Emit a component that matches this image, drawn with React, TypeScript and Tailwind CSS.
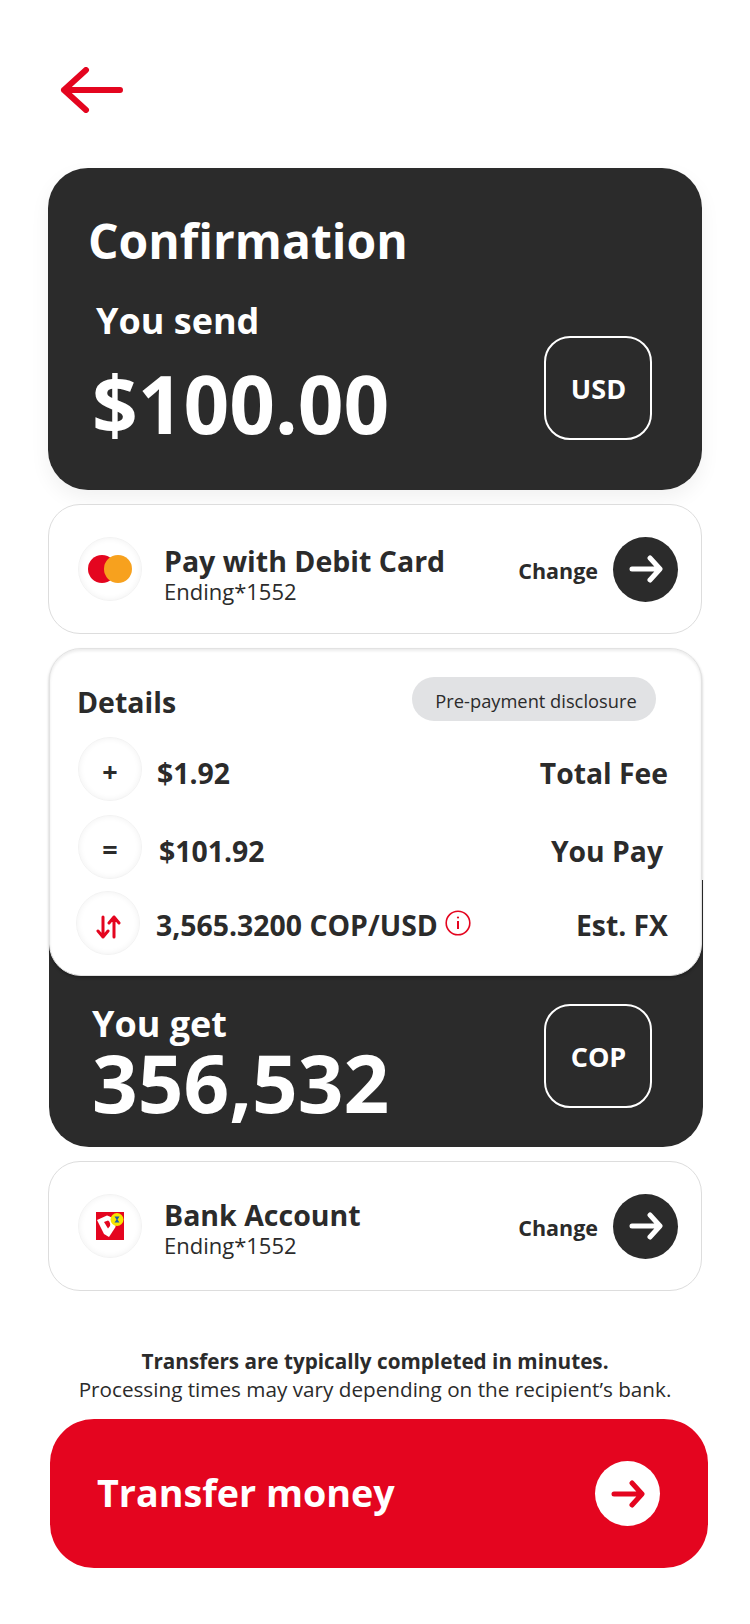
import React from "react";

const Arrow = ({ color }: { color: string }) => (
  <svg width="34" height="28" viewBox="0 0 34 28" fill="none" stroke={color} strokeWidth="5" strokeLinecap="round" strokeLinejoin="round">
    <path d="M3 14H30M21 3L31 14L21 25" />
  </svg>
);

const Circle = ({ children, className = "" }: { children?: React.ReactNode; className?: string }) => (
  <div className={`w-16 h-16 shrink-0 rounded-full bg-white flex items-center justify-center border border-[#f3f3f3] shadow-[inset_0_0_6px_rgba(0,0,0,0.06)] ${className}`}>
    {children}
  </div>
);

const PayRow = ({ icon, title, textClass }: { icon: React.ReactNode; title: string; textClass: string }) => (
  <div className="h-[130px] rounded-[32px] border border-[#dddddd] bg-white flex items-center pl-[29px] pr-[23px]">
    <Circle>{icon}</Circle>
    <div className={`ml-[22px] flex-1 flex flex-col ${textClass}`}>
      <div className="text-[28.5px] leading-[34px] font-bold">{title}</div>
      <div className="text-[22px] leading-[26px] font-normal">Ending*1552</div>
    </div>
    <div className="text-[21.5px] font-bold mr-[15px] pt-[4px]">Change</div>
    <div className="w-[65px] h-[65px] rounded-full bg-[#2b2b2b] flex items-center justify-center">
      <Arrow color="#ffffff" />
    </div>
  </div>
);

const CodeBox = ({ code }: { code: string }) => (
  <div className="w-[108px] h-[104px] rounded-[26px] border-2 border-white flex items-center justify-center text-white text-[27px] font-bold pt-[3px] pl-[1px]">
    {code}
  </div>
);

const DetailRow = ({ sym, left, right, className = "", rightClass = "", textClass = "pt-[8px]" }: { sym: React.ReactNode; left: React.ReactNode; right: string; className?: string; rightClass?: string; textClass?: string }) => (
  <div className={`flex items-center ${className}`}>
    <Circle className="pt-[7px]">{sym}</Circle>
    <div className={`ml-[15px] flex-1 text-[28.4px] font-bold flex items-center ${textClass}`}>{left}</div>
    <div className={`text-[28.3px] font-bold ${textClass} ${rightClass}`}>{right}</div>
  </div>
);

export default function App() {
  return (
    <div className="w-[750px] h-[1624px] bg-white text-[#2b2b2b] font-['Open_Sans',sans-serif] overflow-hidden">
      <div className="pt-[67px] pl-[60px] h-[168px]">
        <svg width="66" height="46" viewBox="0 0 66 46" fill="none" stroke="#e4051f" strokeWidth="6" strokeLinecap="round" strokeLinejoin="round">
          <path d="M4 23H60M26 3L4 23L26 43" />
        </svg>
      </div>

      <div className="mx-12 w-[654px]">
        <div className="h-[322px] rounded-[40px] bg-[#2b2b2b] text-white shadow-[0_8px_20px_rgba(0,0,0,0.06)] flex flex-col pl-10 pr-[50px] pt-[37px]">
          <div className="text-[48px] leading-[66px] font-bold mt-[3px]">Confirmation</div>
          <div className="flex items-start justify-between">
            <div className="pl-[8px]">
              <div className="text-[36px] leading-[48px] font-bold mt-[23px]">You send</div>
              <div className="-ml-[4px] text-[80px] leading-[100px] font-bold mt-[8px]">$100.00</div>
            </div>
            <div className="mt-[62px]"><CodeBox code="USD" /></div>
          </div>
        </div>

        <div className="mt-[14px]">
          <PayRow
            title="Pay with Debit Card"
            textClass="pt-[10px]"
            icon={
              <svg width="44" height="28" viewBox="0 0 44 28">
                <circle cx="14" cy="14" r="14" fill="#e4051f" />
                <circle cx="30" cy="14" r="14" fill="#f7a11e" />
              </svg>
            }
          />
        </div>

        <div className="relative z-10 mt-[14px] ml-[1px] h-[328px] rounded-[32px] bg-white border border-[#e2e2e2] shadow-[inset_0_2px_3px_rgba(0,0,0,0.08),0_2px_3px_rgba(0,0,0,0.25)] pl-[28px] pr-[33px] pt-[28px]">
          <div className="flex items-center justify-between h-[44px]">
            <div className="text-[28.5px] font-bold mt-[6px] -ml-[1px]">Details</div>
            <div className="mr-[12px] w-[244px] h-[44px] rounded-full bg-[#e1e2e4] flex items-center justify-center text-[18.3px] pl-[4px] pt-[3px]">Pre-payment disclosure</div>
          </div>
          <DetailRow className="mt-[16px]" sym={<span className="text-[27px] font-bold">+</span>} left="$1.92" right="Total Fee" />
          <DetailRow className="mt-[14px]" sym={<span className="text-[27px] font-bold">=</span>} left={<span className="ml-[2px]">$101.92</span>} right="You Pay" rightClass="mr-[5px]" />
          <DetailRow
            className="mt-[12px] -ml-[2px]"
            textClass="pt-[5px] pl-[1px]"
            sym={
              <svg width="26" height="26" viewBox="0 0 26 26" fill="none" stroke="#e4051f" strokeWidth="3" strokeLinecap="round" strokeLinejoin="round">
                <path d="M8 3V23M3 17L8 23L13 17M19 23V3M14 9L19 3L24 9" />
              </svg>
            }
            left={
              <>
                <span>3,565.3200 COP/USD</span>
                <svg className="ml-[7px] -mt-[4px]" width="26" height="26" viewBox="0 0 26 26" fill="none" stroke="#e4051f" strokeWidth="1.6">
                  <circle cx="13" cy="13" r="11.8" />
                  <path d="M13 11V19" strokeWidth="2" />
                  <circle cx="13" cy="7.5" r="1.1" fill="#e4051f" stroke="none" />
                </svg>
              </>
            }
            right="Est. FX"
          />
        </div>

        <div className="-mt-[96px] ml-[1px] w-[654px] h-[267px] rounded-b-[40px] bg-[#2b2b2b] text-white flex items-start justify-between pl-[43px] pr-[51px] pt-[122px] relative z-0">
          <div>
            <div className="text-[36px] leading-[40px] font-bold mt-[2px]">You get</div>
            <div className="text-[80px] leading-[80px] font-bold -mt-[2px]">356,532</div>
          </div>
          <div className="mt-[2px]"><CodeBox code="COP" /></div>
        </div>

        <div className="mt-[14px]">
          <PayRow
            title="Bank Account"
            textClass="pt-[4px]"
            icon={
              <svg width="28" height="28" viewBox="0 0 28 28">
                <rect width="28" height="28" fill="#e4051f" />
                <path d="M1 8L11 3.5C17 5 20 9.5 19.5 15L13 25L8 22L1 8Z" fill="#ffffff" />
                <path d="M8 10L12 8.5C14 9.5 14.5 12 14 14L12 16.5L8 10Z" fill="#e4051f" />
                <circle cx="21" cy="7.5" r="6.5" fill="#f6e500" />
                <path d="M18.5 4.5H23.5L21.5 7.5L23.5 10.5H18.5L20.5 7.5Z" fill="#1a5ea8" />
              </svg>
            }
          />
        </div>
      </div>

      <div className="mt-[56px] text-center text-[20.7px] leading-[28px]">
        <div className="font-bold">Transfers are typically completed in minutes.</div>
        <div>Processing times may vary depending on the recipient’s bank.</div>
      </div>

      <div className="mt-[16px] ml-[50px] w-[658px] h-[149px] rounded-[44px] bg-[#e4051f] flex items-center justify-between pl-[47px] pr-[48px] text-white">
        <div className="text-[37.7px] font-bold">Transfer money</div>
        <div className="w-[65px] h-[65px] rounded-full bg-white flex items-center justify-center">
          <Arrow color="#e4051f" />
        </div>
      </div>
    </div>
  );
}
